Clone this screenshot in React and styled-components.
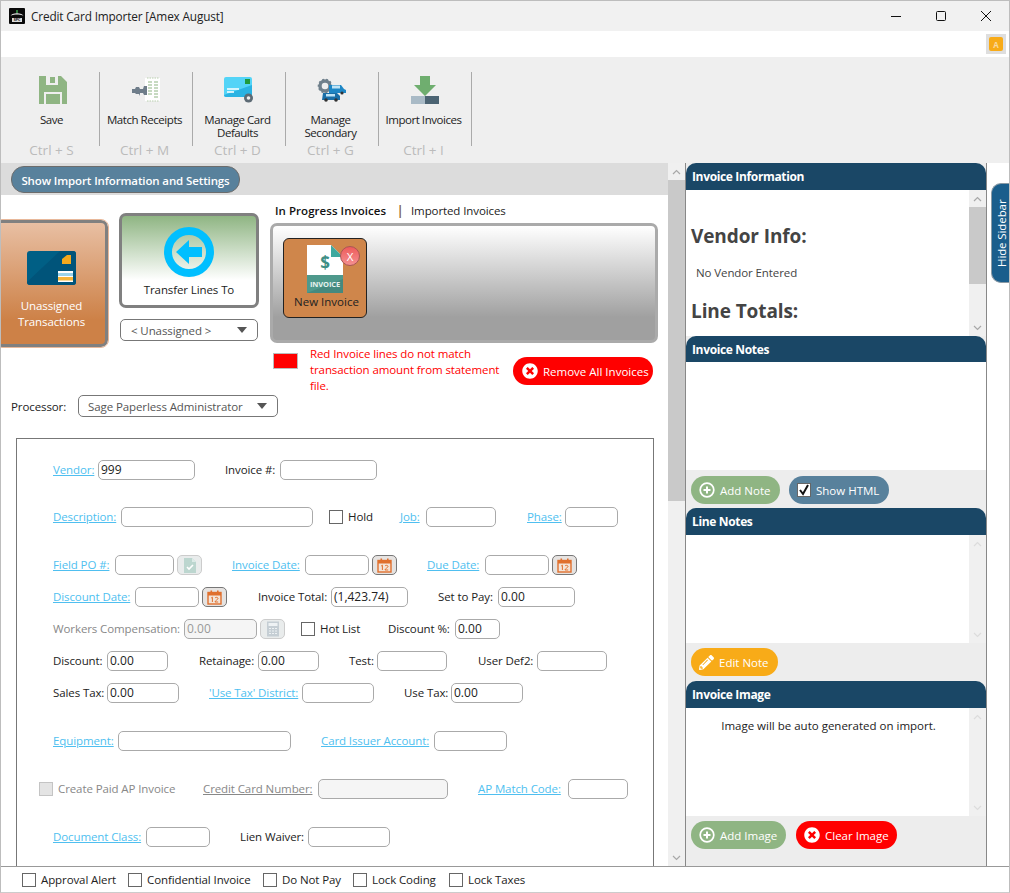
import React from "react";
import styled, { createGlobalStyle } from "styled-components";
import { FaTimesCircle, FaPencilAlt } from "react-icons/fa";

const Global = createGlobalStyle`
  html, body { margin: 0; padding: 0; background: #fff; }
  * { box-sizing: border-box; }
  body { font-family: "Open Sans", "Noto Sans", "Liberation Sans", sans-serif; font-size: 11.5px; color: #222; letter-spacing: -0.1px; }
`;

const Win = styled.div`
  width: 1010px; height: 893px; display: flex; flex-direction: column; overflow: hidden;
  border: 1px solid #bdbdbd; border-bottom-color: #ccc; background: #fff;
`;
const TitleBar = styled.div`
  height: 30px; flex: none; background: #f1f1f1; display: flex; align-items: center; padding-left: 8px;
`;
const TitleText = styled.div`font-size: 11.8px; color: #222; margin-left: 6px; flex: 1; letter-spacing: -0.15px;`;
const WinBtn = styled.svg`width: 12px; height: 12px; margin-right: 33px; &:last-child{ margin-right: 17px; }`;
const Strip = styled.div`
  height: 26px; flex: none; background: #fff; display: flex; justify-content: flex-end; align-items: center; padding-right: 3px;
`;
const AlertBox = styled.div`
  width: 20px; height: 20px; background: #dedede; display: flex; align-items: center; justify-content: center;
`;
const AlertInner = styled.div`
  width: 14px; height: 14px; border-radius: 2px; background: #f8ab18; color: #f8d9a0; font-size: 8px; font-weight: 700;
  display: flex; align-items: center; justify-content: center;
`;
const Toolbar = styled.div`
  height: 106px; flex: none; background: #efefef; display: flex; padding-left: 6px;
`;
const ToolItem = styled.div`
  width: 89px; flex: none; display: flex; flex-direction: column; align-items: center; padding-top: 18px;
`;
const ToolIcon = styled.div`height: 30px; width: 40px; display: flex; justify-content: center; align-items: center; padding-left: 2px;`;
const ToolLabel = styled.div`
  height: 29px; margin-top: 8px; overflow: hidden; line-height: 13px; text-align: center; color: #222; font-size: 11.5px; width: 86px; letter-spacing: -0.45px;
`;
const ToolKey = styled.div`height: 16px; line-height: 16px; font-size: 13.5px; color: #bbb; text-align: center; letter-spacing: 0;`;
const ToolSep = styled.div`width: 1px; height: 74px; margin: 15px 0 0 3px; background: #aaa; flex: none;`;

const Main = styled.div`flex: 1; min-height: 0; display: flex;`;
const LeftCol = styled.div`width: 667px; flex: none; overflow: hidden; display: flex; flex-direction: column;`;
const Band = styled.div`height: 32px; flex: none; background: #dcdcdc; padding: 3px 0 0 10px;`;
const ShowBtn = styled.div`
  width: 229px; height: 27px; border-radius: 13px; background: #58819c; border: 1px solid #6c6c6c; color: #fff; padding-top: 1px;
  font-weight: 600; font-size: 11.5px; display: flex; align-items: center; justify-content: center; letter-spacing: -0.12px;
`;
const TopRow = styled.div`display: flex; flex: none; margin-left: -6px;`;
const UnCard = styled.div`
  width: 113px; height: 127px; margin-top: 25px; border: 3px solid #808080; border-radius: 7px; flex: none;
  background: linear-gradient(#e8bfa3, #cd8147 80%); color: #fff; display: flex; flex-direction: column; align-items: center;
  outline: 1px solid #e8b89a; padding-top: 28px;
`;
const UnText = styled.div`text-align: center; line-height: 16px; margin-top: 12px; font-size: 11.5px;`;
const TransferCol = styled.div`width: 140px; margin: 18px 0 0 11px; flex: none;`;
const TransferCard = styled.div`
  height: 95px; border: 3px solid #808080; border-radius: 7px; background: linear-gradient(#8fb583, #fff 72%);
  display: flex; flex-direction: column; align-items: center; padding-top: 11px; color: #222;
`;
const TransferText = styled.div`margin-top: 5px; font-size: 11.5px; line-height: 16px;`;
const Select = styled.div`
  width: ${p => p.$w}px; height: 22px; border: 1px solid #777; border-radius: 5px; background: #fff; color: #555;
  display: flex; align-items: center; justify-content: space-between; padding: 0 10px 0 ${p => p.$pl}px; font-size: 11.5px; flex: none;
  margin-left: ${p => p.$ml || 0}px; margin-top: ${p => p.$mt || 0}px;
`;
const Caret = styled.div`width: 0; height: 0; border: 5.5px solid transparent; border-top: 6px solid #555; border-bottom: 0;`;
const InvCol = styled.div`width: 388px; margin-left: 11px; flex: none; position: relative;`;
const Tabs = styled.div`height: 28px; padding: 8px 0 0 5px; display: flex; line-height: 15px; font-size: 11.5px;`;
const TabOn = styled.div`font-weight: 600; color: #111; width: 112px; white-space: nowrap; letter-spacing: 0.05px;`;
const TabSep = styled.div`margin-left: 10px; width: 14px; color: #7d5a3a; font-weight: 700;`;
const TabOff = styled.div`color: #222; white-space: nowrap;`;
const InvPanel = styled.div`
  height: 120px; border: 3px solid #aaa; border-radius: 7px; background: linear-gradient(#fff, #a0a0a0 80%); padding: 12px 0 0 10px;
`;
const InvCard = styled.div`
  width: 84px; height: 80px; background: #cf864b; border: 1px solid #222; border-radius: 6px; position: relative;
  display: flex; flex-direction: column; align-items: center; padding-top: 6px;
`;
const InvBadge = styled.div`
  position: absolute; top: 7px; right: 6px; width: 20px; height: 20px; border-radius: 50%; border: 1px solid #aa5555;
  background: linear-gradient(#ee5b5b, #f49090); color: #fff; font-size: 11.5px; display: flex; align-items: center; justify-content: center;
`;
const InvName = styled.div`margin-top: 1px; line-height: 16px; color: #222; font-size: 11.5px; padding-left: 3px; letter-spacing: 0;`;
const LegendRow = styled.div`display: flex; height: 56px; padding: 3px 0 0 3px; align-items: flex-start;`;
const Swatch = styled.div`width: 25px; height: 16px; background: #f00; border: 1px solid #bbb; margin-top: 7px; flex: none;`;
const LegendText = styled.div`width: 200px; margin-left: 12px; color: #f00; line-height: 16px; font-size: 11.5px; flex: none; white-space: nowrap;`;
const Pill = styled.div`
  height: 28px; width: ${p => p.$w}px; border-radius: 14px; background: ${p => p.$bg}; color: #fff; letter-spacing: 0;
  display: flex; align-items: center; padding-left: ${p => p.$pl || 9}px; font-size: 11.5px; gap: ${p => p.$gap || 5}px; flex: none;
  margin-left: ${p => p.$ml || 0}px; margin-top: ${p => p.$mt || 0}px; white-space: nowrap;
`;
const ProcRow = styled.div`display: flex; align-items: center; height: 22px; padding-left: 10px; margin-top: -4px;`;
const ProcLabel = styled.div`width: 54px; color: #222;`;
const FormBox = styled.div`
  flex: none; height: 470px; margin: 21px 0 0 15px; width: 638px; border: 1px solid #777; padding: 21px 0 0 22px;
`;
const Row = styled.div`
  display: flex; align-items: center; height: 20px; padding-left: ${p => p.$pl ?? 14}px; margin-top: ${p => p.$mt || 0}px;
`;
const Lbl = styled.div`
  width: ${p => p.$w}px; margin-left: ${p => p.$ml || 0}px; flex: none; white-space: nowrap; color: ${p => p.$off ? "#888" : "#222"};
  font-size: 11.5px; margin-top: -2px;
`;
const Lnk = styled(Lbl)`
  color: ${p => p.$off ? "#888" : "#4fbff0"}; text-decoration: underline; text-underline-offset: 1px;
`;
const Inp = styled.div`
  width: ${p => p.$w}px; height: 20px; margin-left: ${p => p.$ml || 5}px; flex: none; border: 1px solid #aaa; border-radius: 5px;
  background: ${p => p.$off ? "#f5f5f5" : "#fff"}; color: ${p => p.$off ? "#999" : "#222"}; padding: 0 2px; line-height: 18px; font-size: 12px; letter-spacing: 0;
`;
const IcoBtn = styled.div`
  width: 25px; height: 20px; margin-left: 3px; flex: none; border-radius: 5px; display: flex; align-items: center; justify-content: center;
  background: ${p => p.$off ? "#e9ecec" : "#e6e3e1"}; border: 1px solid ${p => p.$off ? "#ccc" : "#777"};
`;
const Check = styled.div`
  width: 14px; height: 14px; flex: none; margin-left: ${p => p.$ml || 0}px; border: 1px solid ${p => p.$off ? "#c4c4c4" : "#666"};
  background: ${p => p.$off ? "#e4e4e4" : "#fff"}; display: flex; align-items: center; justify-content: center;
`;

const VScroll = styled.div`
  width: 17px; flex: none; background: #f0f0f0; display: flex; flex-direction: column; align-items: center; justify-content: space-between;
  position: relative; padding: 6px 0 5px;
`;
const Thumb = styled.div`
  position: absolute; left: 0; right: 0; top: ${p => p.$top}px; height: ${p => p.$h}px; background: #c9c9c9;
`;
const Chev = ({ down, c = "#a8a8a8" }) => (
  <svg width="9" height="6" viewBox="0 0 9 6"><polyline points={down ? "1,1 4.5,4.5 8,1" : "1,5 4.5,1.5 8,5"} fill="none" stroke={c} strokeWidth="1.2" /></svg>
);

const Side = styled.div`
  width: 302px; flex: none; background: #ededed; border-left: 1px solid #888; border-right: 1px solid #888;
  display: flex; flex-direction: column;
`;
const PanelHead = styled.div`
  height: ${p => p.$h || 27}px; flex: none; background: #1a4766; border-radius: 10px 10px 0 0; color: #fff; font-weight: 700; font-size: 12px;
  padding-left: 6px; display: flex; align-items: center; letter-spacing: -0.35px;
`;
const PanelBody = styled.div`height: ${p => p.$h}px; flex: none; display: flex; background: #fff; overflow: hidden;`;
const PanelText = styled.div`flex: 1; position: relative; overflow: hidden; padding: ${p => p.$pad || 0};`;
const BtnBar = styled.div`
  height: ${p => p.$h}px; flex: none; background: #ededed; display: flex; padding: ${p => p.$pt || 6}px 0 0 5px;
`;
const H2 = styled.div`font-size: 19px; font-weight: 700; color: #444; padding-left: 5px; line-height: 24px; letter-spacing: -0.1px;`;
const Info = styled.div`color: #444; padding-left: 10px; line-height: 16px; margin: 17px 0 18px;`;
const Center = styled.div`text-align: center; padding: 10px 0 0 2px; color: #222; font-size: 11.5px; letter-spacing: 0;`;
const Gutter = styled.div`flex: 1; padding: 20px 0 0 4px; background: #fff;`;
const HideTab = styled.div`
  height: 100px; width: 19px; background: #1a5e8c; color: #fff;
  writing-mode: vertical-rl; transform: rotate(180deg); transform-origin: center; border-radius: 0 10px 10px 0; border-right: 1px solid #8a9aa5;
  border-top: 1px solid #8a9aa5; border-bottom: 1px solid #8a9aa5;
  display: flex; align-items: center; justify-content: center; font-size: 11.5px;
`;
const Footer = styled.div`
  height: 26px; flex: none; border-top: 1px solid #999; background: #fff; display: flex; align-items: center; padding-left: 21px;
`;
const FootLbl = styled.div`margin-left: 5px; width: ${p => p.$w}px; white-space: nowrap; color: #222; flex: none;`;

const Plus = () => (
  <svg width="16" height="16" viewBox="0 0 16 16"><circle cx="8" cy="8" r="6.8" fill="none" stroke="#fff" strokeWidth="1.7" /><path d="M8 4.5v7M4.5 8h7" stroke="#fff" strokeWidth="2" /></svg>
);
const Times = () => <FaTimesCircle size={16} color="#fff" />;
const Cal = () => (
  <svg width="15" height="15" viewBox="0 0 15 15">
    <rect x="1" y="2.5" width="13" height="11.5" fill="#f3e4d8" stroke="#e0702e" strokeWidth="1.4" />
    <rect x="1" y="2.5" width="13" height="3" fill="#e0702e" />
    <rect x="3.5" y="0.5" width="1.6" height="3.5" fill="#e0702e" /><rect x="10" y="0.5" width="1.6" height="3.5" fill="#e0702e" />
    <path d="M4.2 8l1.2-.8V12M8 8c.5-1 3-.9 3 .5 0 1.2-3 2-3 3.5h3.2" fill="none" stroke="#e0702e" strokeWidth="1" />
  </svg>
);
const SaveIco = () => (
  <svg width="28" height="28" viewBox="0 0 28 28">
    <path d="M0 0h7v9h12V0h3l6 6v22H0z" fill="#8fb583" />
    <rect x="11" y="1" width="5" height="6" fill="#8fb583" />
    <rect x="5" y="16" width="18" height="12" fill="#efefef" />
    <rect x="7" y="18" width="14" height="10" fill="#8fb583" />
  </svg>
);
const MatchIco = () => (
  <svg width="30" height="26" viewBox="0 0 30 26">
    <rect x="14" y="1" width="15" height="23" fill="#fff" />
    <path d="M16 1h12M16 24h12" stroke="#b9cfae" strokeWidth="1" strokeDasharray="1.5 1" />
    <path d="M17 5h4M17 8h4M17 11h4M17 14h4M17 17h4M23 5h4M23 8h4M23 11h4M23 14h4M23 17h4M23 20h4" stroke="#8fb583" strokeWidth="1.2" />
    <path d="M1 12h3l1-2h3l1 2h3l1-3h3v9h-3l-1-2h-3v3H9l-1-2H5l-1-1H1z" fill="#6f7d8a" />
  </svg>
);
const CardIco = () => (
  <svg width="30" height="28" viewBox="0 0 30 28">
    <rect x="0" y="1" width="28" height="20" rx="2" fill="#53d4f7" />
    <path d="M0 19 L28 9 V19a2 2 0 0 1-2 2H2a2 2 0 0 1-2-2z" fill="#2ab3e3" />
    <rect x="21" y="3" width="5" height="5" fill="#1f9a3d" />
    <path d="M3 13h12M3 16h7" stroke="#fff" strokeWidth="1.4" />
    <circle cx="24.5" cy="22" r="4.5" fill="#5d6b75" /><circle cx="24.5" cy="22" r="1.8" fill="#efefef" />
  </svg>
);
const CarsIco = () => (
  <svg width="30" height="24" viewBox="0 0 30 24">
    <circle cx="8" cy="8" r="5" fill="none" stroke="#70808c" strokeWidth="3.4" />
    <circle cx="8" cy="8" r="6.6" fill="none" stroke="#70808c" strokeWidth="1.4" strokeDasharray="2 2" />
    <path d="M12 7h12l3 4 2 1v3H12z" fill="#1d86c5" /><rect x="15" y="7.5" width="8" height="3" fill="#bfe3f5" />
    <path d="M6 15h14l3 3v4H5z" fill="#1a6fa8" /><rect x="9" y="16" width="9" height="2.5" fill="#bfe3f5" />
    <circle cx="9" cy="22" r="1.8" fill="#333" /><circle cx="19" cy="22" r="1.8" fill="#333" /><circle cx="25" cy="15" r="1.6" fill="#333" />
  </svg>
);
const ImportIco = () => (
  <svg width="28" height="28" viewBox="0 0 28 28">
    <path d="M9 0h10v9h6L14 20 3 9h6z" fill="#6fae6f" />
    <rect x="0" y="20" width="14" height="8" fill="#a9bac6" /><rect x="14" y="20" width="14" height="8" fill="#4c6473" />
  </svg>
);
const CardBig = () => (
  <svg width="49" height="35" viewBox="0 0 49 35">
    <rect width="49" height="34" rx="3" fill="#005f85" />
    <path d="M0 31 L33 0 H46a3 3 0 0 1 3 3v28a3 3 0 0 1-3 3H3a3 3 0 0 1-3-3z" fill="#00547a" />
    <path d="M35 8 L40 4 H44 V13 H35z" fill="#f6a81c" />
    <rect x="31" y="20" width="15" height="11" fill="#fff" /><rect x="31" y="22" width="15" height="3" fill="#9ad3ea" /><rect x="31" y="26" width="15" height="3.5" fill="#f6b53a" />
  </svg>
);
const ArrowRing = () => (
  <svg width="50" height="50" viewBox="0 0 50 50">
    <circle cx="25" cy="25" r="21" fill="none" stroke="#00bfff" strokeWidth="8" />
    <path d="M12 25 L25 13 V20 H38 V30 H25 V37z" fill="#00bfff" />
  </svg>
);
const InvDoc = () => (
  <svg width="36" height="48" viewBox="0 0 36 48">
    <path d="M0 0H24L36 12V30H0z" fill="#fff" />
    <path d="M24 0L36 12H24z" fill="#3ea99f" />
    <rect x="0" y="30" width="36" height="18" fill="#4e998c" />
    <path d="M0 48L36 34V48z" fill="#45897e" />
    <text x="18" y="24" textAnchor="middle" fontSize="17" fontWeight="700" fontFamily="Open Sans" fill="#3e8f85">$</text>
    <text x="18" y="42" textAnchor="middle" fontSize="7.5" fontWeight="700" fontFamily="Open Sans" fill="#e6f1ee">INVOICE</text>
  </svg>
);
const Logo = () => (
  <svg width="16" height="16" viewBox="0 0 16 16">
    <rect width="16" height="16" rx="1" fill="#0a0a0a" />
    <path d="M1.5 7.5C5 4.5 11 4.5 14.5 7.5 11 6 5 6 1.5 7.5z" fill="#fff" />
    <rect x="7.2" y="2" width="1.6" height="3" fill="#3a9a4a" />
    <rect x="3" y="10" width="10" height="4" fill="#ddd" />
    <text x="8" y="13.4" textAnchor="middle" fontSize="3.8" fontWeight="700" fill="#111" fontFamily="Open Sans">SPC</text>
  </svg>
);
const FieldPoIco = () => (
  <svg width="16" height="17" viewBox="0 0 16 17">
    <path d="M2 1h8l4 4v11H2z" fill="#bcd6cf" /><path d="M10 1l4 4h-4z" fill="#dcebe7" />
    <path d="M5 10l2 2 4-4" fill="none" stroke="#fff" strokeWidth="1.6" />
  </svg>
);
const Calc = () => (
  <svg width="14" height="16" viewBox="0 0 14 16">
    <rect x="1" y="0.5" width="12" height="15" fill="#c5ced4" /><rect x="2.5" y="2" width="9" height="3" fill="#eef2f4" />
    <path d="M3 7.5h8M3 10h8M3 12.5h8" stroke="#eef2f4" strokeWidth="1.2" strokeDasharray="2 1" />
  </svg>
);
const Tick = () => (
  <svg width="12" height="12" viewBox="0 0 12 12"><path d="M2 6l3 4 5-9" fill="none" stroke="#111" strokeWidth="2" /></svg>
);

export default function App() {
  return (
    <Win>
      <Global />
      <TitleBar>
        <Logo />
        <TitleText>Credit Card Importer [Amex August]</TitleText>
        <WinBtn viewBox="0 0 12 12"><path d="M1 6.5h10" stroke="#111" strokeWidth="1" /></WinBtn>
        <WinBtn viewBox="0 0 12 12"><rect x="1.5" y="1.5" width="9" height="9" rx="1" fill="none" stroke="#111" strokeWidth="1" /></WinBtn>
        <WinBtn viewBox="0 0 12 12"><path d="M1 1l10 10M11 1L1 11" stroke="#111" strokeWidth="1" /></WinBtn>
      </TitleBar>
      <Strip><AlertBox><AlertInner>A</AlertInner></AlertBox></Strip>
      <Toolbar>
        <ToolItem><ToolIcon><SaveIco /></ToolIcon><ToolLabel>Save</ToolLabel><ToolKey>Ctrl + S</ToolKey></ToolItem><ToolSep />
        <ToolItem><ToolIcon><MatchIco /></ToolIcon><ToolLabel>Match Receipts</ToolLabel><ToolKey>Ctrl + M</ToolKey></ToolItem><ToolSep />
        <ToolItem><ToolIcon><CardIco /></ToolIcon><ToolLabel>Manage Card<br />Defaults</ToolLabel><ToolKey>Ctrl + D</ToolKey></ToolItem><ToolSep />
        <ToolItem><ToolIcon><CarsIco /></ToolIcon><ToolLabel>Manage<br />Secondary<br />Vendors</ToolLabel><ToolKey>Ctrl + G</ToolKey></ToolItem><ToolSep />
        <ToolItem><ToolIcon><ImportIco /></ToolIcon><ToolLabel>Import Invoices</ToolLabel><ToolKey>Ctrl + I</ToolKey></ToolItem><ToolSep />
      </Toolbar>
      <Main>
        <LeftCol>
          <Band><ShowBtn>Show Import Information and Settings</ShowBtn></Band>
          <TopRow>
            <UnCard><CardBig /><UnText>Unassigned<br />Transactions</UnText></UnCard>
            <TransferCol>
              <TransferCard><ArrowRing /><TransferText>Transfer Lines To</TransferText></TransferCard>
              <Select $w={138} $pl={10} $ml={1} $mt={11}>&lt; Unassigned &gt;<Caret /></Select>
            </TransferCol>
            <InvCol>
              <Tabs><TabOn>In Progress Invoices</TabOn><TabSep>|</TabSep><TabOff>Imported Invoices</TabOff></Tabs>
              <InvPanel>
                <InvCard>
                  <InvDoc />
                  <InvBadge>X</InvBadge>
                  <InvName>New Invoice</InvName>
                </InvCard>
              </InvPanel>
              <LegendRow>
                <Swatch />
                <LegendText>Red Invoice lines do not match<br />transaction amount from statement<br />file.</LegendText>
                <Pill $w={140} $bg="#f00" $ml={3} $mt={11}><Times />Remove All Invoices</Pill>
              </LegendRow>
            </InvCol>
          </TopRow>
          <ProcRow>
            <ProcLabel>Processor:</ProcLabel>
            <Select $w={200} $pl={9} $ml={13}>Sage Paperless Administrator<Caret /></Select>
          </ProcRow>
          <FormBox>
            <Row>
              <Lnk $w={41}>Vendor:</Lnk><Inp $ml={4} $w={97}>999</Inp>
              <Lbl $ml={30} $w={51}>Invoice #:</Lbl><Inp $ml={4} $w={97} />
            </Row>
            <Row $mt={27}>
              <Lnk $w={63}>Description:</Lnk><Inp $w={192} />
              <Check $ml={16} /><Lbl $ml={5} $w={26}>Hold</Lbl>
              <Lnk $ml={26} $w={22}>Job:</Lnk><Inp $ml={4} $w={70} />
              <Lnk $ml={31} $w={34}>Phase:</Lnk><Inp $ml={4} $w={53} />
            </Row>
            <Row $mt={28}>
              <Lnk $w={57}>Field PO #:</Lnk><Inp $w={59} /><IcoBtn $off><FieldPoIco /></IcoBtn>
              <Lnk $ml={30} $w={68}>Invoice Date:</Lnk><Inp $w={64} /><IcoBtn><Cal /></IcoBtn>
              <Lnk $ml={30} $w={53}>Due Date:</Lnk><Inp $w={64} /><IcoBtn><Cal /></IcoBtn>
            </Row>
            <Row $mt={12}>
              <Lnk $w={77}>Discount Date:</Lnk><Inp $w={64} /><IcoBtn><Cal /></IcoBtn>
              <Lbl $ml={31} $w={68}>Invoice Total:</Lbl><Inp $w={77}>(1,423.74)</Inp>
              <Lbl $ml={30} $w={55}>Set to Pay:</Lbl><Inp $w={77}>0.00</Inp>
            </Row>
            <Row $mt={12}>
              <Lbl $off $w={126}>Workers Compensation:</Lbl><Inp $off $w={73}>0.00</Inp><IcoBtn $off><Calc /></IcoBtn>
              <Check $ml={16} /><Lbl $ml={5} $w={41}>Hot List</Lbl>
              <Lbl $ml={27} $w={62}>Discount %:</Lbl><Inp $w={45}>0.00</Inp>
            </Row>
            <Row $mt={12}>
              <Lbl $w={49}>Discount:</Lbl><Inp $w={61}>0.00</Inp>
              <Lbl $ml={31} $w={54}>Retainage:</Lbl><Inp $w={61}>0.00</Inp>
              <Lbl $ml={30} $w={23}>Test:</Lbl><Inp $w={70} />
              <Lbl $ml={31} $w={54}>User Def2:</Lbl><Inp $w={70} />
            </Row>
            <Row $mt={12}>
              <Lbl $w={49}>Sales Tax:</Lbl><Inp $w={72}>0.00</Inp>
              <Lnk $ml={30} $w={89}>'Use Tax' District:</Lnk><Inp $ml={4} $w={72} />
              <Lbl $ml={30} $w={42}>Use Tax:</Lbl><Inp $w={72}>0.00</Inp>
            </Row>
            <Row $mt={28}>
              <Lnk $w={61}>Equipment:</Lnk><Inp $ml={4} $w={173} />
              <Lnk $ml={30} $w={109}>Card Issuer Account:</Lnk><Inp $ml={4} $w={73} />
            </Row>
            <Row $mt={28} $pl={0}>
              <Check $off /><Lbl $off $ml={5} $w={118}>Create Paid AP Invoice</Lbl>
              <Lnk $off $ml={27} $w={110}>Credit Card Number:</Lnk><Inp $off $w={130} />
              <Lnk $ml={30} $w={85}>AP Match Code:</Lnk><Inp $w={60} />
            </Row>
            <Row $mt={28}>
              <Lnk $w={88}>Document Class:</Lnk><Inp $w={64} />
              <Lbl $ml={30} $w={64}>Lien Waiver:</Lbl><Inp $ml={4} $w={82} />
            </Row>
          </FormBox>
        </LeftCol>
        <VScroll>
          <Chev />
          <Thumb $top={17} $h={321} />
          <Chev down />
        </VScroll>
        <Side>
          <PanelHead>Invoice Information</PanelHead>
          <PanelBody $h={146}>
            <PanelText $pad="34px 0 0 0">
              <H2>Vendor Info:</H2>
              <Info>No Vendor Entered</Info>
              <H2>Line Totals:</H2>
            </PanelText>
            <VScroll><Chev /><Thumb $top={17} $h={77} /><Chev down /></VScroll>
          </PanelBody>
          <PanelHead $h={26}>Invoice Notes</PanelHead>
          <PanelBody $h={108} />
          <BtnBar $h={38}>
            <Pill $w={89} $bg="#8fb583" $pl={8} $gap={5}><Plus />Add Note</Pill>
            <Pill $w={100} $bg="#58819c" $pl={8} $gap={5} $ml={9}><Check><Tick /></Check>Show HTML</Pill>
          </BtnBar>
          <PanelHead>Line Notes</PanelHead>
          <PanelBody $h={108}>
            <PanelText />
            <VScroll><Chev c="#dcdcdc" /><Chev down c="#dcdcdc" /></VScroll>
          </PanelBody>
          <BtnBar $h={38} $pt={5}>
            <Pill $w={87} $bg="#f8ab18" $pl={8} $gap={5}><FaPencilAlt size={15} color="#fff" />Edit Note</Pill>
          </BtnBar>
          <PanelHead>Invoice Image</PanelHead>
          <PanelBody $h={108}>
            <PanelText><Center>Image will be auto generated on import.</Center></PanelText>
            <VScroll><Chev c="#dcdcdc" /><Chev down c="#dcdcdc" /></VScroll>
          </PanelBody>
          <BtnBar $h={50} $pt={5}>
            <Pill $w={95} $bg="#8fb583" $pl={8} $gap={5}><Plus />Add Image</Pill>
            <Pill $w={101} $bg="#f00" $pl={8} $gap={5} $ml={10}><Times />Clear Image</Pill>
          </BtnBar>
        </Side>
        <Gutter><HideTab>Hide Sidebar</HideTab></Gutter>
      </Main>
      <Footer>
        <Check /><FootLbl $w={76}>Approval Alert</FootLbl>
        <Check $ml={11} /><FootLbl $w={105}>Confidential Invoice</FootLbl>
        <Check $ml={11} /><FootLbl $w={60}>Do Not Pay</FootLbl>
        <Check $ml={11} /><FootLbl $w={66}>Lock Coding</FootLbl>
        <Check $ml={11} /><FootLbl $w={60}>Lock Taxes</FootLbl>
      </Footer>
    </Win>
  );
}
